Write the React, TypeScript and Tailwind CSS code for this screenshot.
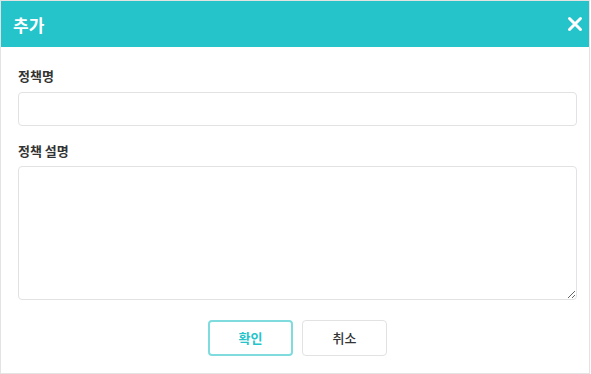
export default function App() {
  return (
    <div
      className="w-[591px] h-[374px] bg-white"
      style={{ fontFamily: '"Noto Sans CJK KR", "Noto Sans", sans-serif' }}
    >
      {/* Dialog frame */}
      <div className="flex h-[374px] w-[590px] flex-col border border-[#e3e3e3] bg-white">
        {/* Header */}
        <div className="flex h-[46px] shrink-0 items-center justify-between bg-[#25c4ca] pl-[12px] pr-[4px]">
          <h2 className="text-[17px] font-bold leading-none text-white">추가</h2>
          <button className="flex h-[20px] w-[20px] items-center justify-center text-white">
            <svg width="16" height="16" viewBox="0 0 16 16" fill="none">
              <path d="M2.5 2.5L13.5 13.5M13.5 2.5L2.5 13.5" stroke="white" strokeWidth="3" strokeLinecap="round" />
            </svg>
          </button>
        </div>

        {/* Body */}
        <div className="flex flex-1 flex-col pl-[17px] pr-[12px] pt-[19px]">
          <label className="text-[13px] font-bold leading-[20px] text-[#333]">정책명</label>
          <input
            type="text"
            className="mt-[6px] h-[34px] w-full rounded-[4px] border border-[#e2e2e2] px-2 text-[13px] outline-none"
          />

          <label className="mt-[15px] text-[13px] font-bold leading-[20px] text-[#333]">정책 설명</label>
          <textarea className="mt-[5px] h-[134px] w-full rounded-[4px] border border-[#e2e2e2] px-2 py-1 text-[13px] outline-none" />

          {/* Actions */}
          <div className="mt-[20px] flex justify-center gap-[9px]">
            <button className="h-[36px] w-[85px] rounded-[4px] border-2 border-[#7fdbde] bg-white text-[13px] font-bold text-[#25c4ca]">
              확인
            </button>
            <button className="h-[36px] w-[85px] rounded-[4px] border border-[#e2e2e2] bg-white text-[13px] font-medium text-[#333]">
              취소
            </button>
          </div>
        </div>
      </div>
    </div>
  );
}
